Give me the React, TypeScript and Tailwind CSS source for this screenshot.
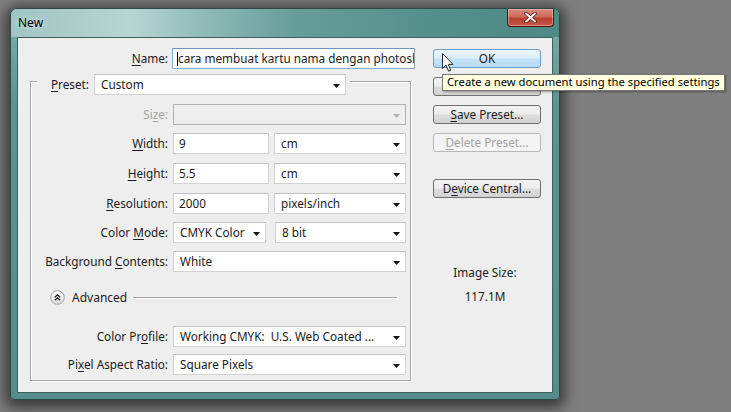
import React from 'react';

const DropArrow = ({ disabled }: { disabled?: boolean }) => (
  <svg width="7" height="4" viewBox="0 0 7 4" className="shrink-0 mt-[2px]">
    <polygon points="0,0 7,0 3.5,4" fill={disabled ? '#b3b3b3' : '#111'} />
  </svg>
);

function Select({ value, w, disabled }: { value: string; w: string; disabled?: boolean }) {
  return (
    <div
      className={`${w} h-[21px] flex items-center pl-[6px] pr-[5px] border ${
        disabled ? 'border-[#b0b0b0] bg-[#efefef]' : 'border-[#d2d2d2] border-t-[#c4c4c4] bg-white'
      }`}
    >
      <span className="flex-1 whitespace-pre overflow-hidden leading-[19px]">{value}</span>
      <DropArrow disabled={disabled} />
    </div>
  );
}

function Input({ value, w }: { value: string; w: string }) {
  return (
    <div className={`${w} h-[21px] flex items-center pl-[5px] border border-[#d2d2d2] border-t-[#c4c4c4] bg-white`}>
      <span className="leading-[19px]">{value}</span>
    </div>
  );
}

function Label({ children, w, disabled }: { children: React.ReactNode; w: string; disabled?: boolean }) {
  return (
    <div className={`${w} shrink-0 text-right whitespace-nowrap ${disabled ? 'text-[#a3a3a3]' : ''}`}>{children}</div>
  );
}

const U = ({ children }: { children: React.ReactNode }) => (
  <span className="underline underline-offset-[2px] decoration-[1px]">{children}</span>
);

function Btn({ children, kind }: { children: React.ReactNode; kind?: 'ok' | 'disabled' }) {
  const cls =
    kind === 'ok'
      ? 'border-[#6f9cc4] bg-[linear-gradient(180deg,#eaf5fc_0%,#dcefFA_48%,#c6e4f7_52%,#b4dbf3_100%)]'
      : kind === 'disabled'
      ? 'border-[#b6b9bb] bg-[#f4f4f4] text-[#a3a3a3]'
      : 'border-[#707070] bg-[linear-gradient(180deg,#f4f4f4_0%,#ececec_48%,#dedede_52%,#d2d2d2_100%)]';
  return (
    <div className={`w-[108px] h-[19px] rounded-[3px] border flex items-center justify-center leading-none ${cls}`}>
      {children}
    </div>
  );
}

function Row({ label, children, mt, disabled }: { label: React.ReactNode; children: React.ReactNode; mt: string; disabled?: boolean }) {
  return (
    <div className={`flex items-center h-[21px] ${mt}`}>
      <Label w="w-[137px]" disabled={disabled}>
        {label}
      </Label>
      <div className="ml-[5px] w-[233px] flex gap-[5px]">{children}</div>
    </div>
  );
}

export default function App() {
  return (
    <div className="w-[731px] h-[412px] bg-[#7f7f7f] overflow-hidden relative font-['Noto_Sans',sans-serif] text-[11.75px] text-[#1b1b1b] pl-[10px] pt-[8px]">
      <div className="w-[550px] h-[392px] rounded-t-[7px] rounded-b-[4px] border border-[#2d4947] overflow-hidden flex flex-col bg-[linear-gradient(180deg,#7fb0ad_0%,#5d9390_25%,#568c89_100%)] shadow-[0_3px_14px_5px_rgba(0,0,0,0.55)]">
        {/* title bar */}
        <div className="h-[28px] shrink-0 flex items-start bg-[linear-gradient(90deg,#9fc5c2_0%,#b7d5d3_22%,#8db9b6_36%,#679d9a_52%,#56908c_75%,#4e8985_100%)]">
          <div className="self-center pl-[7px] text-[12px] text-black [text-shadow:0_0_6px_rgba(255,255,255,0.9)]">New</div>
          <div className="ml-auto mr-[5px] w-[47px] h-[18px] rounded-b-[4px] border border-t-0 border-[#4a1209] flex items-center justify-center bg-[linear-gradient(180deg,#d98a7e_0%,#cd6b5d_45%,#b8402f_55%,#c4584a_100%)] shadow-[inset_0_0_0_1px_rgba(255,210,200,0.45)]">
            <svg width="13" height="11" viewBox="0 0 13 11">
              <path d="M2 1.5 L11 9.5 M11 1.5 L2 9.5" stroke="#5a1a12" strokeWidth="3.6" strokeLinecap="round" />
              <path d="M2 1.5 L11 9.5 M11 1.5 L2 9.5" stroke="#ffffff" strokeWidth="2" strokeLinecap="round" />
            </svg>
          </div>
        </div>
        {/* body */}
        <div className="flex-1 px-[6px] pb-[6px]">
          <div className="w-[536px] h-[356px] border border-[#3f5f5d] bg-[#eeeeee] flex">
            {/* left column */}
            <div className="w-[397px] pt-[10px] flex flex-col">
              <div className="flex items-center h-[21px]">
                <Label w="w-[150px]">
                  <U>N</U>ame:
                </Label>
                <div className="ml-[4px] w-[243px] h-[21px] border border-[#86a9cc] border-t-[#6f95bd] bg-white flex items-center pl-[4px] overflow-hidden whitespace-nowrap">
                  <span className="w-[1px] h-[14px] bg-black shrink-0" />
                  <span className="leading-[19px]">cara membuat kartu nama dengan photosh</span>
                </div>
              </div>
              {/* group box */}
              <div className="relative mt-[12px] ml-[12px] w-[381px] h-[300px] border border-[#a7a7a7] shadow-[inset_1px_1px_0_#ffffff,1px_1px_0_#ffffff] pt-[22px]">
                <div className="absolute left-[6px] top-[-8px] h-[21px] flex items-center bg-[#eeeeee] pl-[14px] pr-[4px]">
                  <span className="whitespace-nowrap">
                    <U>P</U>reset:
                  </span>
                  <div className="ml-[5px]">
                    <Select value="Custom" w="w-[252px]" />
                  </div>
                </div>
                <Row label={<>Si<U>z</U>e:</>} mt="mt-0" disabled>
                  <Select value="" w="w-[233px]" disabled />
                </Row>
                <Row label={<><U>W</U>idth:</>} mt="mt-[8px]">
                  <Input value="9" w="w-[96px]" />
                  <Select value="cm" w="w-[132px]" />
                </Row>
                <Row label={<><U>H</U>eight:</>} mt="mt-[9px]">
                  <Input value="5.5" w="w-[96px]" />
                  <Select value="cm" w="w-[132px]" />
                </Row>
                <Row label={<><U>R</U>esolution:</>} mt="mt-[9px]">
                  <Input value="2000" w="w-[96px]" />
                  <Select value="pixels/inch" w="w-[132px]" />
                </Row>
                <Row label={<>Color <U>M</U>ode:</>} mt="mt-[8px]">
                  <Select value="CMYK Color" w="w-[93px]" />
                  <div className="ml-[4px]">
                    <Select value="8 bit" w="w-[131px]" />
                  </div>
                </Row>
                <Row label={<>Background <U>C</U>ontents:</>} mt="mt-[8px]">
                  <Select value="White" w="w-[233px]" />
                </Row>
                {/* advanced */}
                <div className="mt-[18px] h-[15px] flex items-center pl-[19px] pr-[13px]">
                  <svg width="15" height="15" viewBox="0 0 15 15" className="shrink-0">
                    <defs>
                      <linearGradient id="cg" x1="0" y1="0" x2="0" y2="1">
                        <stop offset="0" stopColor="#ffffff" />
                        <stop offset="1" stopColor="#dcdcdc" />
                      </linearGradient>
                    </defs>
                    <circle cx="7.5" cy="7.5" r="6.8" fill="url(#cg)" stroke="#a0a0a0" strokeWidth="1" />
                    <path d="M4.8 7.3 L7.5 4.8 L10.2 7.3 M4.8 10.3 L7.5 7.8 L10.2 10.3" fill="none" stroke="#222" strokeWidth="1.3" />
                  </svg>
                  <span className="ml-[7px] text-[12px]">Advanced</span>
                  <div className="flex-1 ml-[6px] border-t border-b border-t-[#a3a3a3] border-b-white" />
                </div>
                <Row label={<>Color Pr<U>o</U>file:</>} mt="mt-[21px]">
                  <Select value="Working CMYK:  U.S. Web Coated ..." w="w-[233px]" />
                </Row>
                <Row label={<>Pi<U>x</U>el Aspect Ratio:</>} mt="mt-[7px]">
                  <Select value="Square Pixels" w="w-[233px]" />
                </Row>
              </div>
            </div>
            {/* right column */}
            <div className="ml-[18px] pt-[11px] flex flex-col">
              <Btn kind="ok">OK</Btn>
              <div className="mt-[9px]">
                <Btn>Cancel</Btn>
              </div>
              <div className="mt-[9px]">
                <Btn>
                  <span>
                    <U>S</U>ave Preset...
                  </span>
                </Btn>
              </div>
              <div className="mt-[9px]">
                <Btn kind="disabled">
                  <span>
                    <U>D</U>elete Preset...
                  </span>
                </Btn>
              </div>
              <div className="mt-[27px]">
                <Btn>
                  <span>
                    D<U>e</U>vice Central...
                  </span>
                </Btn>
              </div>
              <div className="mt-[66px] w-[104px] text-center leading-[16px]">Image Size:</div>
              <div className="mt-[8px] w-[104px] text-center leading-[16px]">117.1M</div>
            </div>
          </div>
        </div>
      </div>

      {/* mouse cursor */}
      <svg width="13" height="20" viewBox="0 0 13 20" className="absolute left-[442px] top-[53px]">
        <path d="M0.5 0.5 L0.5 15.5 L4 12.2 L6.6 18.2 L8.8 17.2 L6.3 11.4 L11 11.4 Z" fill="#ffffff" stroke="#2a2a2a" strokeWidth="1" strokeLinejoin="round" />
      </svg>

      {/* tooltip */}
      <div className="absolute left-[442px] top-[74px] h-[17px] px-[4px] border border-[#767676] bg-[#ffffe1] flex items-center whitespace-nowrap text-[11.25px] text-black shadow-[1px_1px_2px_rgba(0,0,0,0.35)]">
        Create a new document using the specified settings
      </div>
    </div>
  );
}
